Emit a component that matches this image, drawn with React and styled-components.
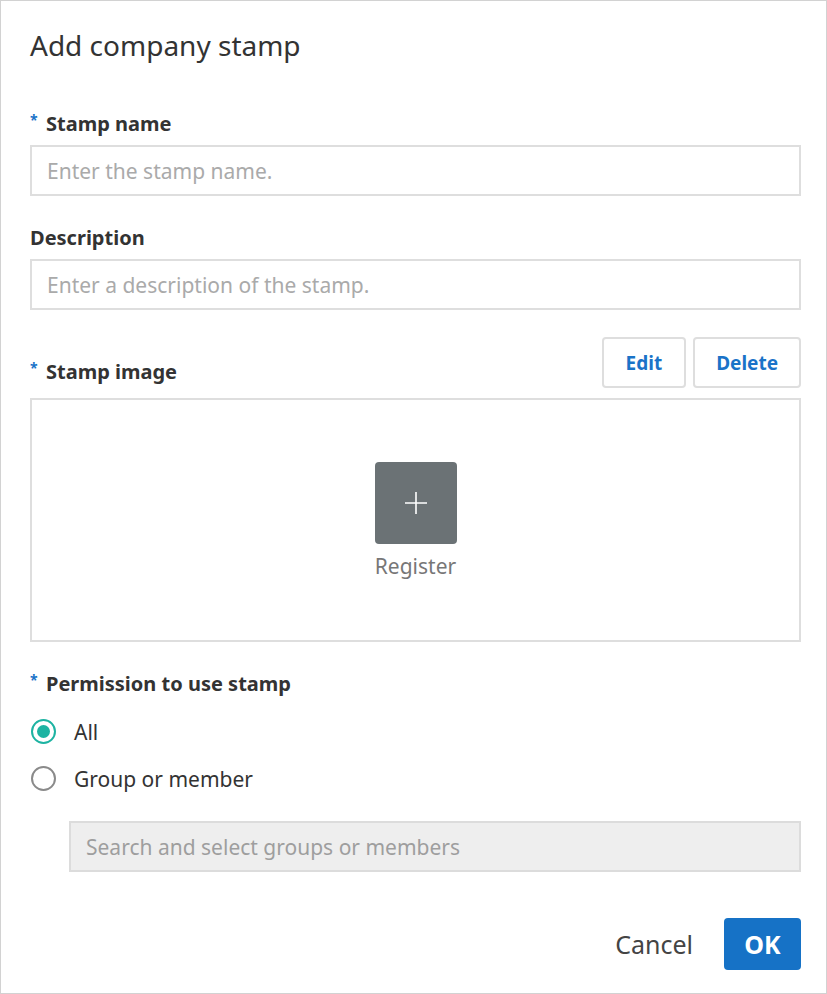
import React, { useState } from "react"
import styled, { createGlobalStyle } from "styled-components"

const GlobalStyle = createGlobalStyle`
    html, body {
        margin: 0;
        padding: 0;
        background: #fff;
    }
    * {
        box-sizing: border-box;
    }
`;

const Panel = styled.div`
    width: 827px;
    height: 994px;
    border: 1px solid #d2d2d2;
    padding: 0 25px 0 29px;
    font-family: "Noto Sans", Lato, sans-serif;
    color: #333;
    background: #fff;
    display: flex;
    flex-direction: column;
`;

const Title = styled.h1`
    margin: 0;
    font-size: 28px;
    font-weight: 400;
    line-height: 88px;
    color: #333;
`;

const Label = styled.div`
    margin-top: ${p => p.$top || 0}px;
    font-size: 20px;
    font-weight: 700;
    line-height: 30px;
    color: #333;
`;

const Required = styled.span`
    display: inline-block;
    width: 16px;
    color: #1a73c8;
    font-size: 14px;
    line-height: 0;
    position: relative;
    top: -6px;
`;

const Input = styled.input`
    display: block;
    width: 100%;
    height: 51px;
    margin-top: 6px;
    border: 2px solid #dedede;
    padding: 0 15px;
    font-family: inherit;
    font-size: 21px;
    color: #333;
    outline: none;
    background: #fff;

    &::placeholder {
        color: #aaaaaa;
    }
`;

const ImageHeader = styled.div`
    margin-top: 27px;
    display: flex;
    align-items: flex-end;
    justify-content: space-between;
    height: 51px;

    ${Label} {
        margin-bottom: 1px;
    }
`;

const ButtonGroup = styled.div`
    display: flex;
    gap: 7px;
    height: 100%;
`;

const OutlineButton = styled.button`
    height: 100%;
    padding: 0 ${p => p.$pad || 21}px;
    border: 2px solid #dedede;
    border-radius: 4px;
    background: #fff;
    color: #1a73c8;
    font-family: inherit;
    font-size: 19px;
    font-weight: 700;
    cursor: pointer;
`;

const ImageBox = styled.div`
    margin-top: 10px;
    height: 244px;
    border: 2px solid #dedede;
    display: flex;
    flex-direction: column;
    align-items: center;
    justify-content: center;
`;

const RegisterButton = styled.button`
    width: 82px;
    height: 82px;
    border: none;
    border-radius: 4px;
    background: #6b7275;
    display: flex;
    align-items: center;
    justify-content: center;
    cursor: pointer;
`;

const RegisterText = styled.div`
    margin-top: 9px;
    font-size: 21px;
    line-height: 26px;
    color: #777;
`;

const RadioList = styled.div`
    margin-top: 9px;
`;

const RadioRow = styled.label`
    display: flex;
    align-items: center;
    height: 47px;
    font-size: 21px;
    color: #333;
    cursor: pointer;
`;

const RadioCircle = styled.span`
    width: 25px;
    height: 25px;
    border-radius: 50%;
    border: 2px solid ${p => p.$checked ? "#1db3a2" : "#8a8a8a"};
    display: flex;
    align-items: center;
    justify-content: center;
    margin-right: 18px;
    margin-left: 1px;

    &::after {
        content: "";
        width: 13px;
        height: 13px;
        border-radius: 50%;
        background: ${p => p.$checked ? "#1db3a2" : "transparent"};
    }
`;

const SearchInput = styled(Input)`
    margin-top: 19px;
    margin-left: 39px;
    width: auto;
    background: #eeeeee;
    border-color: #dcdcdc;

    &::placeholder {
        color: #9e9e9e;
    }
`;

const Footer = styled.div`
    margin-top: 46px;
    display: flex;
    justify-content: flex-end;
    align-items: center;
    gap: 31px;
`;

const TextButton = styled.button`
    border: none;
    background: none;
    padding: 0;
    font-family: inherit;
    font-size: 25px;
    color: #444;
    cursor: pointer;
`;

const PrimaryButton = styled.button`
    width: 77px;
    height: 52px;
    border: none;
    border-radius: 4px;
    background: #1672c6;
    color: #fff;
    font-family: inherit;
    font-size: 25px;
    font-weight: 700;
    cursor: pointer;
`;

const PlusIcon = () => (
    <svg width="24" height="24" viewBox="0 0 24 24">
        <path d="M12 1v22M1 12h22" stroke="#fff" strokeWidth="1.6" fill="none" />
    </svg>
)

export default function App() {
    const [permission, setPermission] = useState("all")

    return (
        <>
            <GlobalStyle />
            <Panel>
                <Title>Add company stamp</Title>

                <Label $top={20}><Required>*</Required>Stamp name</Label>
                <Input placeholder="Enter the stamp name." />

                <Label $top={27}>Description</Label>
                <Input placeholder="Enter a description of the stamp." />

                <ImageHeader>
                    <Label><Required>*</Required>Stamp image</Label>
                    <ButtonGroup>
                        <OutlineButton $pad={22}>Edit</OutlineButton>
                        <OutlineButton $pad={21}>Delete</OutlineButton>
                    </ButtonGroup>
                </ImageHeader>
                <ImageBox>
                    <RegisterButton><PlusIcon /></RegisterButton>
                    <RegisterText>Register</RegisterText>
                </ImageBox>

                <Label $top={27}><Required>*</Required>Permission to use stamp</Label>
                <RadioList>
                    <RadioRow onClick={() => setPermission("all")}>
                        <RadioCircle $checked={permission === "all"} />
                        All
                    </RadioRow>
                    <RadioRow onClick={() => setPermission("group")}>
                        <RadioCircle $checked={permission === "group"} />
                        Group or member
                    </RadioRow>
                </RadioList>
                <SearchInput placeholder="Search and select groups or members" disabled={permission === "all"} />

                <Footer>
                    <TextButton>Cancel</TextButton>
                    <PrimaryButton>OK</PrimaryButton>
                </Footer>
            </Panel>
        </>
    )
}
